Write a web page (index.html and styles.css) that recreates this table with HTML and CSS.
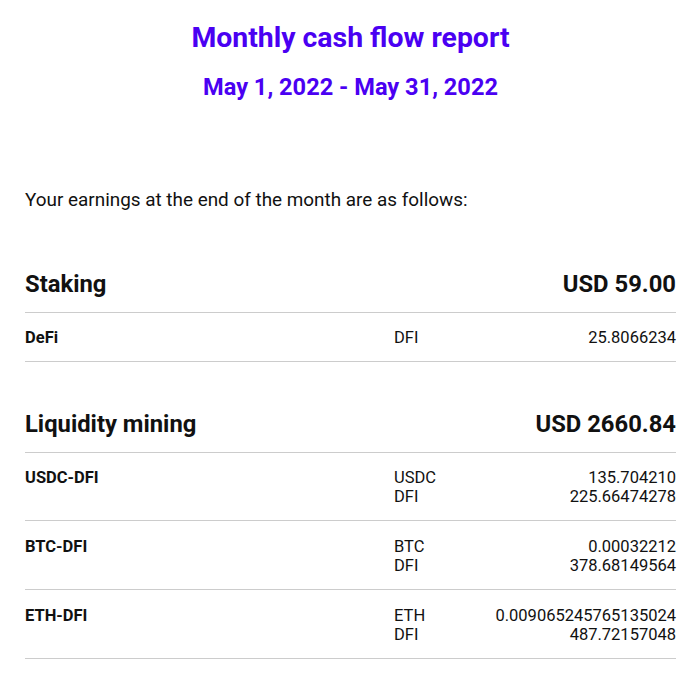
FILE: index.html
```html
<!DOCTYPE html>
<html>
<head>
<meta charset="utf-8">
<link rel="stylesheet" href="styles.css">
</head>
<body>
<div class="page">
  <h1 class="title">Monthly cash flow report</h1>
  <h2 class="period">May 1, 2022 - May 31, 2022</h2>
  <p class="intro">Your earnings at the end of the month are as follows:</p>

  <section class="group">
    <div class="group-head"><span>Staking</span><span>USD 59.00</span></div>
    <div class="row">
      <div class="name">DeFi</div>
      <div class="syms"><div>DFI</div></div>
      <div class="amts"><div>25.8066234</div></div>
    </div>
  </section>

  <section class="group">
    <div class="group-head"><span>Liquidity mining</span><span>USD 2660.84</span></div>
    <div class="row">
      <div class="name">USDC-DFI</div>
      <div class="syms"><div>USDC</div><div>DFI</div></div>
      <div class="amts"><div>135.704210</div><div>225.66474278</div></div>
    </div>
    <div class="row">
      <div class="name">BTC-DFI</div>
      <div class="syms"><div>BTC</div><div>DFI</div></div>
      <div class="amts"><div>0.00032212</div><div>378.68149564</div></div>
    </div>
    <div class="row">
      <div class="name">ETH-DFI</div>
      <div class="syms"><div>ETH</div><div>DFI</div></div>
      <div class="amts"><div>0.009065245765135024</div><div>487.72157048</div></div>
    </div>
  </section>
</div>
</body>
</html>
```

FILE: styles.css
```css
* { box-sizing: border-box; }
html, body { margin: 0; padding: 0; background: #fff; }
body {
  font-family: Roboto, "Liberation Sans", sans-serif;
  color: #111;
}
.page {
  padding: 0 24px 0 25px;
}
.title {
  margin: 0;
  padding-top: 22px;
  font-size: 28.4px;
  line-height: 32px;
  font-weight: 700;
  color: #4a00f2;
  text-align: center;
}
.period {
  margin: 19px 0 0;
  font-size: 23.6px;
  line-height: 28px;
  font-weight: 700;
  color: #4a00f2;
  text-align: center;
}
.intro {
  margin: 87px 0 0;
  font-size: 18.9px;
  line-height: 24px;
}
.group { margin-top: 47px; }
.group:first-of-type { margin-top: 57px; }
.group-head {
  display: flex;
  justify-content: space-between;
  font-size: 23.8px;
  line-height: 30px;
  font-weight: 700;
  padding-bottom: 13px;
  border-bottom: 1px solid #cccccc;
}
.row {
  display: grid;
  grid-template-columns: 369px 1fr auto;
  padding: 15px 0 14px;
  border-bottom: 1px solid #cccccc;
  font-size: 16.5px;
  line-height: 19px;
}
.row + .row { padding-top: 16px; }
.name { font-weight: 700; }
.amts { text-align: right; }
```
